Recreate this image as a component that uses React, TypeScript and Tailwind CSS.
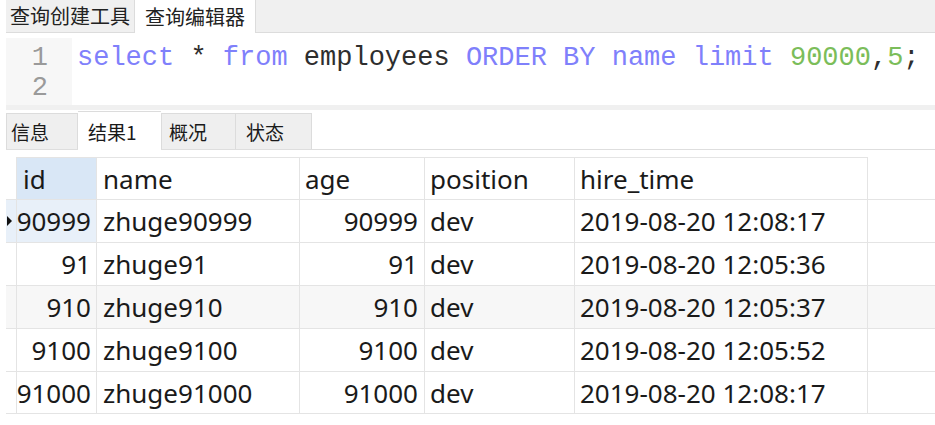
import React from 'react';

const rows = [
  { id: '90999', name: 'zhuge90999', age: '90999', position: 'dev', hire: '2019-08-20 12:08:17' },
  { id: '91', name: 'zhuge91', age: '91', position: 'dev', hire: '2019-08-20 12:05:36' },
  { id: '910', name: 'zhuge910', age: '910', position: 'dev', hire: '2019-08-20 12:05:37' },
  { id: '9100', name: 'zhuge9100', age: '9100', position: 'dev', hire: '2019-08-20 12:05:52' },
  { id: '91000', name: 'zhuge91000', age: '91000', position: 'dev', hire: '2019-08-20 12:08:17' },
];

const cjk = { fontFamily: '"Noto Sans CJK SC", "Noto Sans", sans-serif' };
const mono = { fontFamily: '"Liberation Mono", "Courier New", monospace' };
const ui = { fontFamily: '"Noto Sans", "Noto Sans CJK SC", sans-serif' };

export default function App() {
  return (
    <div className="w-[935px] h-[425px] bg-white overflow-hidden text-[#1a1a1a]">
      {/* query tabs */}
      <div className="ml-[6px] flex h-[33px] bg-[#f0f0f0] border-b border-[#dcdcdc]" style={cjk}>
        <div className="flex items-center px-[4px] text-[20px] leading-none text-[#222]">查询创建工具</div>
        <div className="flex items-center px-[10px] bg-white border-x border-[#dcdcdc] text-[20px] leading-none text-[#222] -mb-px">
          查询编辑器
        </div>
        <div className="flex-1" />
      </div>

      {/* editor */}
      <div className="ml-[6px] mt-[5px] flex h-[67px]" style={mono}>
        <div className="w-[66px] bg-[#f7f7f7] pt-[5px] pr-[24px] text-right text-[27px] leading-[30px] text-[#9a9a9a]">
          <div>1</div>
          <div>2</div>
        </div>
        <div className="pl-[5px] pt-[5px] text-[27px] leading-[30px] whitespace-pre text-[#2e2e2e]">
          <span className="text-[#7f80fb]">select</span> * <span className="text-[#7f80fb]">from</span> employees{' '}
          <span className="text-[#7f80fb]">ORDER BY name limit</span> <span className="text-[#7bbd5a]">90000</span>,
          <span className="text-[#7bbd5a]">5</span>;
        </div>
      </div>
      <div className="ml-[6px] h-[5px] bg-[#f0f0f0]" />

      {/* result tabs */}
      <div className="ml-[6px] flex items-end h-[40px] border-b border-[#dedede]" style={cjk}>
        <div className="w-[72px] h-[36px] flex items-center pl-[4px] bg-[#efefef] border border-b-0 border-[#dcdcdc] text-[19px] leading-none">
          信息
        </div>
        <div className="w-[83px] h-[39px] flex items-center pl-[10px] bg-white border-t border-[#dcdcdc] text-[19px] leading-none -mb-px">
          结果1
        </div>
        <div className="w-[75px] h-[36px] flex items-center pl-[7px] bg-[#efefef] border border-b-0 border-[#dcdcdc] text-[19px] leading-none">
          概况
        </div>
        <div className="w-[76px] h-[36px] flex items-center pl-[10px] bg-[#efefef] border border-l-0 border-b-0 border-[#dcdcdc] text-[19px] leading-none">
          状态
        </div>
      </div>

      {/* result grid */}
      <div className="ml-[6px] mt-[7px] text-[26px] leading-none" style={ui}>
        <div className="grid grid-cols-[10px_81px_203px_125px_150px_293px] h-[42px]">
          <div />
          <div className="flex items-center pl-[6px] bg-[#d9e7f6] border-t border-r border-l border-[#e4e4e4]">id</div>
          <div className="flex items-center pl-[6px] border-t border-r border-[#e4e4e4]">name</div>
          <div className="flex items-center pl-[5px] border-t border-r border-[#e4e4e4]">age</div>
          <div className="flex items-center pl-[5px] border-t border-r border-[#e4e4e4]">position</div>
          <div className="flex items-center pl-[5px] border-t border-r border-[#e4e4e4]">hire_time</div>
        </div>
        {rows.map((r, i) => (
          <div
            key={i}
            className={`grid grid-cols-[10px_81px_203px_125px_150px_293px] h-[43px] border-t border-[#e4e4e4] ${
              i === 2 ? 'bg-[#f7f7f7]' : ''
            } ${i === 4 ? 'border-b' : ''}`}
          >
            <div className={`flex items-center ${i === 0 ? 'bg-[#e8f0f9]' : ''}`}>
              {i === 0 && (
                <svg width="5" height="10" viewBox="0 0 5 10" className="ml-[1px]">
                  <path d="M0 0 L5 5 L0 10 Z" fill="#111" />
                </svg>
              )}
            </div>
            <div className={`flex items-center justify-end pr-[5px] border-l border-r border-[#e4e4e4] ${i === 0 ? 'bg-[#e8f0f9]' : ''}`}>
              {r.id}
            </div>
            <div className="flex items-center pl-[6px] border-r border-[#e4e4e4]">{r.name}</div>
            <div className="flex items-center justify-end pr-[6px] border-r border-[#e4e4e4]">{r.age}</div>
            <div className="flex items-center pl-[5px] border-r border-[#e4e4e4]">{r.position}</div>
            <div className="flex items-center pl-[5px] border-r border-[#e4e4e4]">{r.hire}</div>
          </div>
        ))}
      </div>
    </div>
  );
}
